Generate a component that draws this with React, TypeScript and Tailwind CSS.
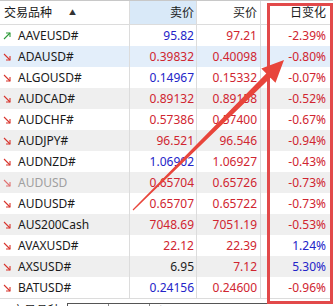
import React from "react";

type Row = {
  sym: string;
  up: boolean;
  sell: string;
  sellC: "b" | "r" | "k";
  buy: string;
  chg: string;
  chgC: "b" | "r";
  dim?: boolean;
};

const rows: Row[] = [
  { sym: "AAVEUSD#", up: true, sell: "95.82", sellC: "b", buy: "97.21", chg: "-2.39%", chgC: "r" },
  { sym: "ADAUSD#", up: false, sell: "0.39832", sellC: "r", buy: "0.40098", chg: "-0.80%", chgC: "r" },
  { sym: "ALGOUSD#", up: false, sell: "0.14967", sellC: "b", buy: "0.15332", chg: "-0.07%", chgC: "r" },
  { sym: "AUDCAD#", up: false, sell: "0.89132", sellC: "r", buy: "0.89158", chg: "-0.52%", chgC: "r" },
  { sym: "AUDCHF#", up: false, sell: "0.57386", sellC: "r", buy: "0.57400", chg: "-0.67%", chgC: "r" },
  { sym: "AUDJPY#", up: false, sell: "96.521", sellC: "r", buy: "96.546", chg: "-0.94%", chgC: "r" },
  { sym: "AUDNZD#", up: false, sell: "1.06902", sellC: "b", buy: "1.06927", chg: "-0.43%", chgC: "r" },
  { sym: "AUDUSD", up: false, sell: "0.65704", sellC: "r", buy: "0.65726", chg: "-0.73%", chgC: "r", dim: true },
  { sym: "AUDUSD#", up: false, sell: "0.65707", sellC: "r", buy: "0.65722", chg: "-0.73%", chgC: "r" },
  { sym: "AUS200Cash", up: false, sell: "7048.69", sellC: "r", buy: "7051.19", chg: "-0.53%", chgC: "r" },
  { sym: "AVAXUSD#", up: false, sell: "22.12", sellC: "r", buy: "22.39", chg: "1.24%", chgC: "b" },
  { sym: "AXSUSD#", up: false, sell: "6.95", sellC: "k", buy: "7.12", chg: "5.30%", chgC: "b" },
  { sym: "BATUSD#", up: false, sell: "0.24156", sellC: "b", buy: "0.24600", chg: "-0.96%", chgC: "r" },
];

const colorCls = (c: "b" | "r" | "k") =>
  c === "b" ? "text-[#2323c8]" : c === "r" ? "text-[#d02530]" : "text-[#222222]";

function Dir({ up, dim }: { up: boolean; dim?: boolean }) {
  const col = up ? "#2e9a3a" : dim ? "#e07070" : "#d8342c";
  return (
    <svg width="8" height="8" viewBox="0 0 8 8" className="shrink-0">
      {up ? (
        <g stroke={col} strokeWidth="1.1" fill="none">
          <path d="M1 7 L7 1" />
          <path d="M3 1 H7 V5" />
        </g>
      ) : (
        <g stroke={col} strokeWidth="1.1" fill="none">
          <path d="M1 1 L7 7" />
          <path d="M3 7 H7 V3" />
        </g>
      )}
    </svg>
  );
}

export default function App() {
  const font = { fontFamily: '"Noto Sans", "Noto Sans CJK SC", sans-serif' };
  return (
    <div
      className="relative w-[333px] h-[306px] overflow-hidden bg-white text-[12px] text-[#1a1a1a]"
      style={font}
    >
      {/* header */}
      <div className="grid grid-cols-[130px_67px_64px_1fr] h-[25px] border-t border-[#c8c8c8] border-b border-b-[#dcdcdc]">
        <div className="flex items-center pl-[4px] border-r border-[#dcdcdc]">
          <span>交易品种</span>
          <span className="ml-[17px] text-[7px] leading-none text-[#333]">▲</span>
        </div>
        <div className="flex items-center justify-end pr-[2px] bg-[#d9e9f8] border-r border-[#dcdcdc]">
          卖价
        </div>
        <div className="flex items-center justify-end pr-[3px] border-r border-[#dcdcdc]">买价</div>
        <div className="flex items-center justify-end pr-[7px]">日变化</div>
      </div>

      {rows.map((r, i) => {
        const bg = i === 1 ? "bg-[#e3eefa]" : i % 2 === 1 ? "bg-[#efefef]" : "bg-white";
        return (
          <div key={r.sym} className={`grid grid-cols-[130px_67px_64px_1fr] h-[21px] ${bg}`}>
            <div className="flex items-center pl-[3px] border-r border-[#dcdcdc]">
              <Dir up={r.up} dim={r.dim} />
              <span className={`ml-[7px] ${r.dim ? "text-[#a0a0a0]" : ""}`}>{r.sym}</span>
            </div>
            <div className={`flex items-center justify-end pr-[2px] border-r border-[#dcdcdc] ${colorCls(r.sellC)}`}>
              {r.sell}
            </div>
            <div className="flex items-center justify-end pr-[3px] border-r border-[#dcdcdc] text-[#d02530]">
              {r.buy}
            </div>
            <div className={`flex items-center justify-end pr-[7px] ${colorCls(r.chgC)}`}>{r.chg}</div>
          </div>
        );
      })}

      {/* bottom tab strip */}
      <div className="flex h-[20px] border-t border-[#dcdcdc] bg-white">
        <div className="w-[67px] pt-[3px] pl-[12px] text-[12px]">交易品种</div>
        <div className="flex flex-1 mt-[4px] border-t border-l border-[#555] pl-[8px] text-[12px] text-[#444]">
          <span className="pr-[8px] border-r border-[#888]">详细</span>
          <span className="px-[8px] border-r border-[#888]">交易</span>
          <span className="px-[8px]">报价</span>
        </div>
      </div>

      {/* red highlight box */}
      <div className="absolute left-[267px] top-[3px] w-[66px] h-[301px] border-[3px] border-[#e2494a] pointer-events-none" />

      {/* red arrow */}
      <svg
        className="absolute left-0 top-0 pointer-events-none"
        width="333"
        height="306"
        viewBox="0 0 333 306"
      >
        <polygon
          fill="#e8453b"
          points="133.4,210.4 270.5,77.7 275.5,82.7 284,60 261.3,68.5 266.3,73.5 132.6,209.6"
        />
      </svg>
    </div>
  );
}
